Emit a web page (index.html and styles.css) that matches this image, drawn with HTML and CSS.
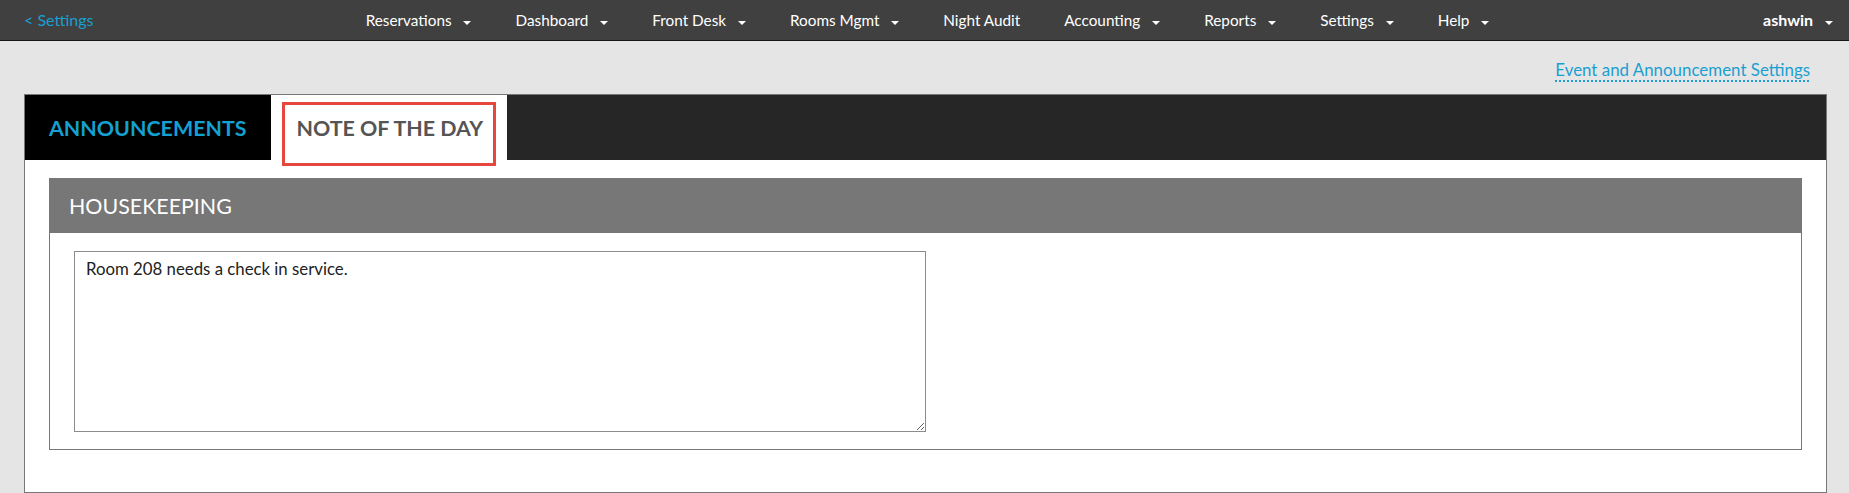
FILE: index.html
```html
<!DOCTYPE html>
<html lang="en">
<head>
  <meta charset="UTF-8" />
  <meta name="viewport" content="width=device-width, initial-scale=1.0"/>
  <title>Note of the Day - Settings</title>
  <link rel="stylesheet" href="styles.css">
</head>
<body>
  <nav class="topnav">
    <a class="back" href="#">&lt; Settings</a>
    <ul class="menu">
      <li><a href="#">Reservations <span class="caret"></span></a></li>
      <li><a href="#">Dashboard <span class="caret"></span></a></li>
      <li><a href="#">Front Desk <span class="caret"></span></a></li>
      <li><a href="#">Rooms Mgmt <span class="caret"></span></a></li>
      <li><a href="#">Night Audit</a></li>
      <li><a href="#">Accounting <span class="caret"></span></a></li>
      <li><a href="#">Reports <span class="caret"></span></a></li>
      <li><a href="#">Settings <span class="caret"></span></a></li>
      <li><a href="#">Help <span class="caret"></span></a></li>
    </ul>
    <a class="user" href="#">ashwin <span class="caret"></span></a>
  </nav>

  <div class="page">
    <div class="links">
      <a href="#">Event and Announcement Settings</a>
    </div>

    <div class="panel">
      <div class="tabs">
        <a class="tab" href="#">Announcements</a>
        <a class="tab tab-current" href="#">
          Note of the Day
          <span class="mark"></span>
        </a>
      </div>

      <div class="panel-body">
        <div class="note">
          <h3 class="note-title">Housekeeping</h3>
          <div class="note-body">
            <textarea class="note-text">Room 208 needs a check in service.</textarea>
          </div>
        </div>
      </div>
    </div>
  </div>
</body>
</html>
```

FILE: styles.css
```css
body {
  margin: 0;
  background: #e5e5e5;
  font-family: Lato, "Open Sans", sans-serif;
  font-size: 16px;
  color: #222;
}

a {
  text-decoration: none;
}

/* barre du haut */
.topnav {
  display: grid;
  grid-template-columns: 1fr auto 1fr;
  align-items: center;
  height: 40px;
  background: #404040;
  border-bottom: 1px solid #151515;
  font-size: 15.3px;
  line-height: 40px;
}

.back {
  color: #1a9fd0;
  font-size: 16px;
  padding-left: 24px;
  justify-self: start;
}

.menu {
  display: flex;
  list-style: none;
  margin: 0;
  padding: 0 0 0 6px;
}

.menu a {
  display: block;
  color: #fff;
  padding: 0 22px;
}

.caret {
  display: inline-block;
  width: 0;
  height: 0;
  margin-left: 8px;
  vertical-align: 1px;
  border-top: 4px solid #fff;
  border-left: 4px solid transparent;
  border-right: 4px solid transparent;
}

.user {
  justify-self: end;
  color: #fff;
  font-weight: bold;
  font-size: 16px;
  padding-right: 16px;
}

/* contenu */
.page {
  padding: 0 22px 0 24px;
}

.links {
  text-align: right;
  padding: 19px 17px 0 0;
  line-height: 20px;
  margin-bottom: 14px;
  font-size: 16.9px;
}

.links a {
  color: #1a9fd0;
  text-decoration: underline dotted 2px;
  text-underline-offset: 4px;
}

.panel {
  background: #fff;
  border: 1px solid #777;
}

.tabs {
  display: flex;
  height: 65px;
  background: #262626;
}

.tab {
  display: flex;
  align-items: center;
  padding: 0 25px 0 24px;
  background: #000;
  color: #14a0d0;
  font-size: 21.4px;
  font-weight: bold;
  text-transform: uppercase;
}

.tab-current {
  position: relative;
  background: #fff;
  color: #555;
  padding: 0 24px 0 25px;
}

.mark {
  position: absolute;
  left: 11px;
  top: 7px;
  width: 214px;
  height: 64px;
  box-sizing: border-box;
  border: 3px solid #e5473e;
}

.panel-body {
  padding: 18px 24px 42px 24px;
}

.note {
  border: 1px solid #777;
}

.note-title {
  margin: 0;
  height: 54px;
  line-height: 54px;
  padding-left: 19px;
  background: #777;
  color: #fff;
  font-size: 21.4px;
  font-weight: normal;
  text-transform: uppercase;
}

.note-body {
  padding: 18px 24px 17px 24px;
}

.note-text {
  display: block;
  width: 852px;
  height: 181px;
  box-sizing: border-box;
  margin: 0;
  padding: 6px 11px;
  border: 1px solid #8c8c8c;
  font-family: Lato, "Open Sans", sans-serif;
  font-size: 16.8px;
  color: #222;
}
```
